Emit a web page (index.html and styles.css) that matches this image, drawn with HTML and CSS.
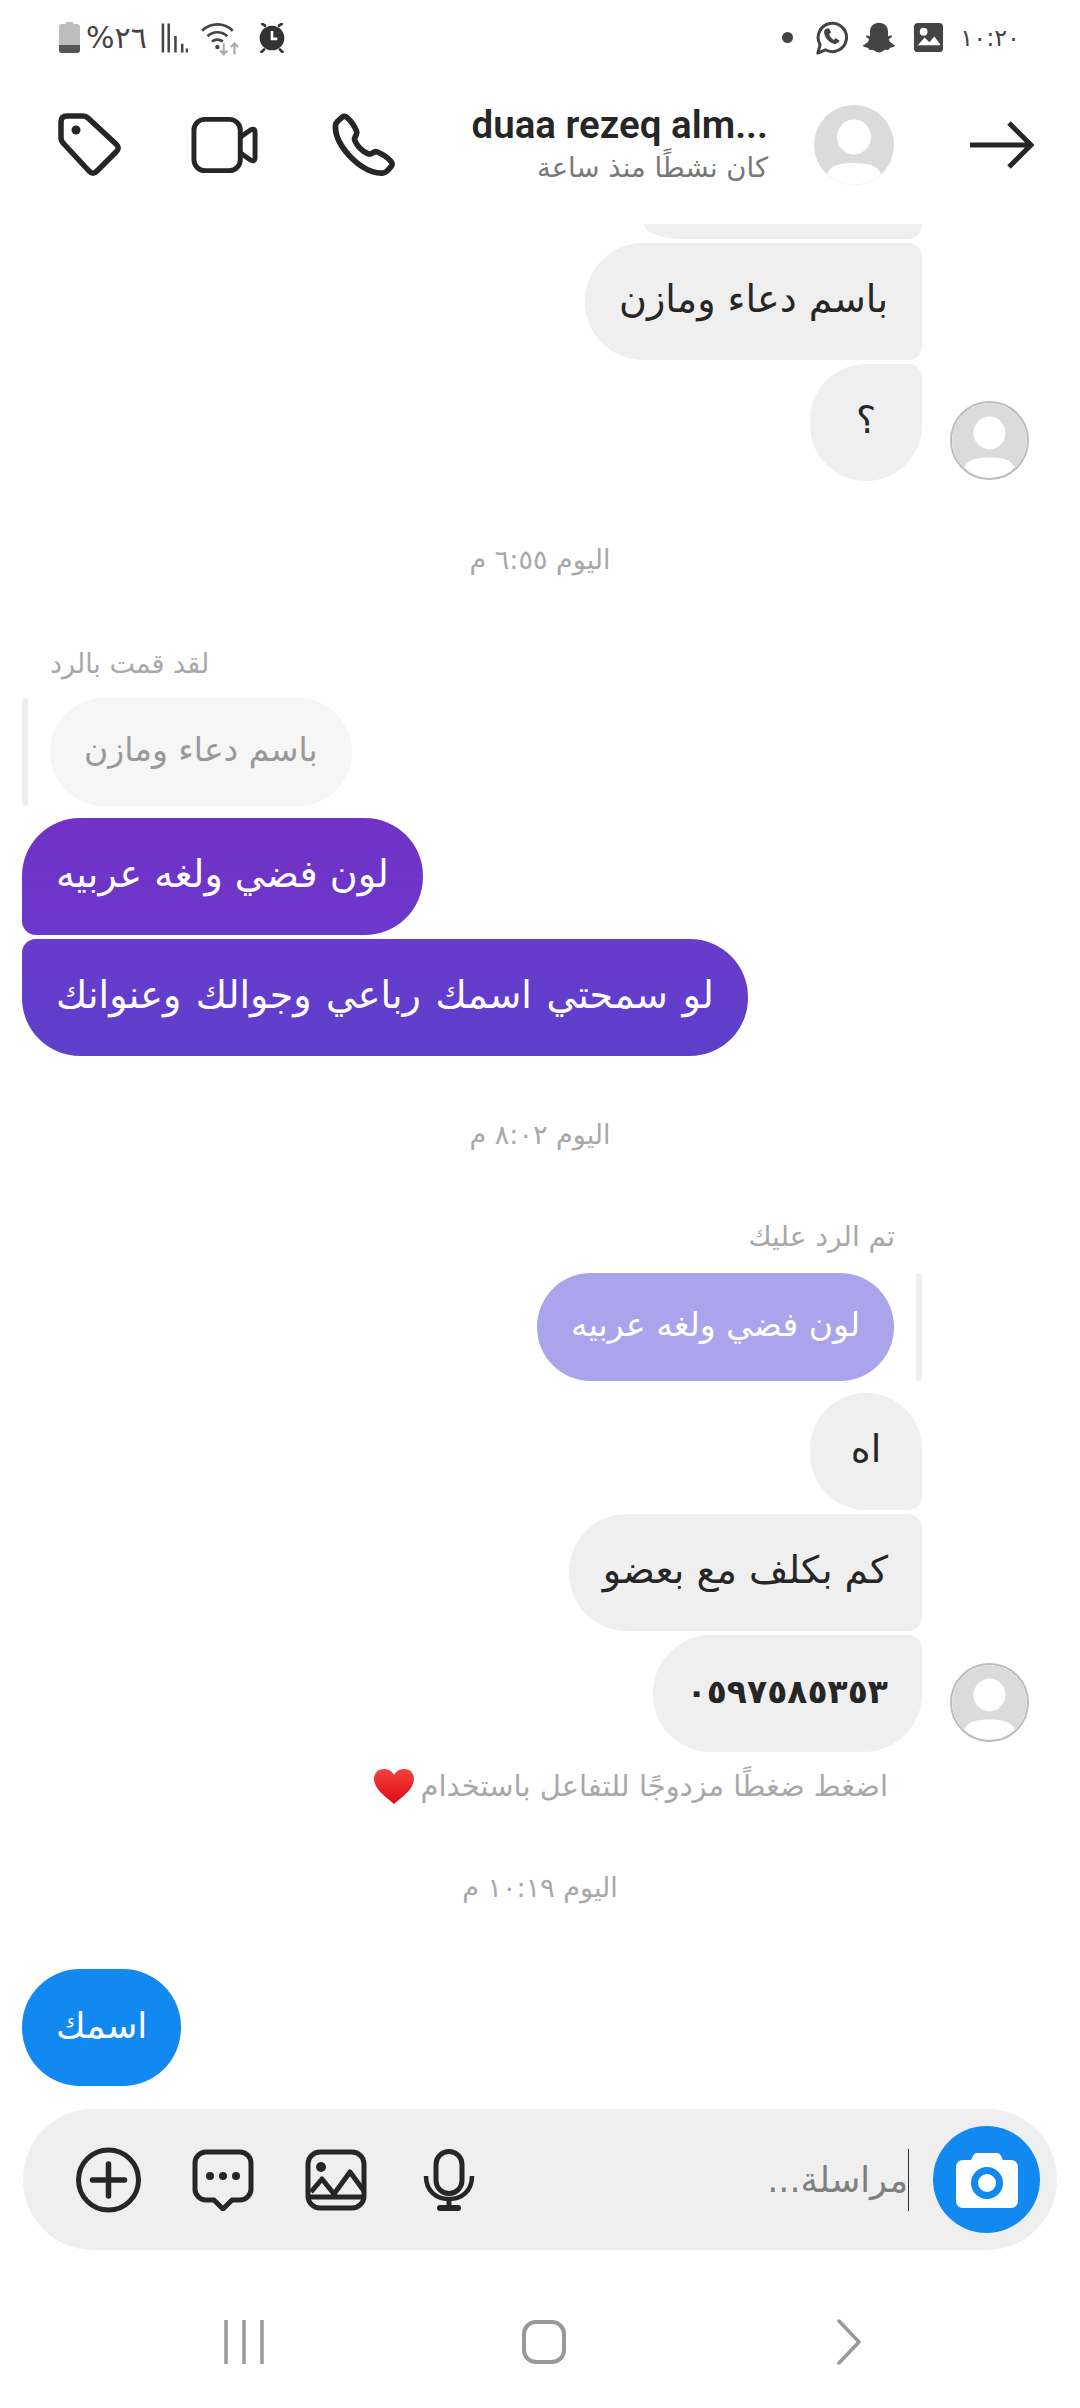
FILE: index.html
```html
<!DOCTYPE html>
<html lang="ar" dir="rtl">
<head>
    <meta charset="UTF-8">
    <meta name="viewport" content="width=device-width, initial-scale=1.0">
    <title>duaa rezeq</title>
    <link rel="stylesheet" href="styles.css">
</head>
<body>
    <!-- shared avatar drawing -->
    <svg class="defs" width="0" height="0">
        <symbol id="person" viewBox="0 0 80 80">
            <circle cx="40" cy="40" r="40" fill="#dbdbdb"/>
            <ellipse cx="40" cy="32" rx="17" ry="17.5" fill="#fff"/>
            <path d="M13 69c3-9 14-11 27-11s24 2 27 11a39 39 0 0 1-54 0z" fill="#fff"/>
        </symbol>
    </svg>

    <div class="status-bar">
        <div class="status-group">
            <span class="status-time">١٠:٢٠</span>
            <svg class="gap-16" width="31" height="31" viewBox="0 0 32 32"><path d="M5 1h22a4 4 0 0 1 4 4v22a4 4 0 0 1-4 4H5a4 4 0 0 1-4-4V5a4 4 0 0 1 4-4z" fill="#444"/><circle cx="11" cy="10" r="4" fill="#fff"/><path d="M4 25l8-9 5 5 5-6 6 8v1H4z" fill="#fff"/></svg>
            <svg class="gap-16" width="36" height="36" viewBox="0 0 40 40"><path d="M20 3c6 0 10 4 10 10v5l4-1c1 1 0 3-3 4 0 3 4 6 7 7 0 2-4 2-6 3-1 2-2 3-4 2-3 0-4 3-8 3s-5-3-8-3c-2 1-3 0-4-2-2-1-6-1-6-3 3-1 7-4 7-7-3-1-4-3-3-4l4 1v-5c0-6 4-10 10-10z" fill="#444"/></svg>
            <svg class="gap-12" width="34" height="36" viewBox="0 0 36 38"><path d="M3 35l2.400-9A15 15 0 1 1 11 31.500z" fill="none" stroke="#444" stroke-width="3.200" stroke-linejoin="round"/><path d="M12 9c-2 1-3 3-2 6 1 4 5 9 10 10 3 1 5-1 6-3l-4-3-2 2c-2-1-4-3-5-6l2-2-2-4z" fill="#444"/></svg>
            <span class="status-dot"></span>
        </div>
        <div class="status-group">
            <svg width="30" height="30" viewBox="0 0 32 34"><path d="M8 3L5 1M24 3l3-2M7 30l-3 3M25 30l3 3" stroke="#333" stroke-width="3" stroke-linecap="round"/><circle cx="16" cy="17" r="14" fill="#333"/><path d="M16 9v9h6" fill="none" stroke="#fff" stroke-width="3"/></svg>
            <svg class="gap-14" width="44" height="36" viewBox="0 0 46 40"><path d="M2 12a24 24 0 0 1 34 0M8 18a16 16 0 0 1 22 0M13 24a9 9 0 0 1 12 0" fill="none" stroke="#444" stroke-width="3"/><circle cx="19" cy="30" r="2.500" fill="#444"/><path d="M26 26v12m-4-4l4 4 4-4" fill="none" stroke="#aaa" stroke-width="2.400"/><path d="M38 38V26m-4 4l4-4 4 4" fill="none" stroke="#aaa" stroke-width="2.400"/></svg>
            <svg class="gap-11" width="27" height="30" viewBox="0 0 28 30"><path d="M2 0v30M8 0v30M15 13v17M22 21v9M27 26v4" stroke="#444" stroke-width="2.600"/></svg>
            <span class="status-battery-text">٢٦%</span>
            <svg class="gap-6" width="21" height="31" viewBox="0 0 21 31"><path d="M7 0h7v2H7z" fill="#bdbdbd"/><rect y="2" width="21" height="29" rx="3" fill="#bdbdbd"/><path d="M0 23h21v5a3 3 0 0 1-3 3H3a3 3 0 0 1-3-3z" fill="#555"/></svg>
        </div>
    </div>

    <div class="header">
        <svg class="back" width="66" height="48" viewBox="0 0 66 48"><path d="M2 24h60M41 2l22 22-22 22" fill="none" stroke="#262626" stroke-width="5" stroke-linejoin="miter"/></svg>
        <svg class="header-avatar" width="80" height="80"><use href="#person"/></svg>
        <div class="peer">
            <div class="peer-name" dir="ltr">duaa rezeq alm...</div>
            <div class="peer-status">كان نشطًا منذ ساعة</div>
        </div>
        <div class="header-actions">
            <svg class="phone" width="68" height="68" viewBox="0 0 24 24"><path d="M18.227 22.912c-4.913 0-9.286-3.627-11.486-5.828C4.486 14.83.731 10.291.921 5.231a3.289 3.289 0 0 1 .908-2.138 17.116 17.116 0 0 1 1.865-1.71 2.307 2.307 0 0 1 3.004.174 13.283 13.283 0 0 1 3.658 5.325 2.551 2.551 0 0 1-.19 1.941l-.455.853a.463.463 0 0 0-.024.387 7.57 7.57 0 0 0 4.077 4.075.455.455 0 0 0 .386-.024l.853-.455a2.548 2.548 0 0 1 1.94-.19 13.278 13.278 0 0 1 5.326 3.658 2.309 2.309 0 0 1 .174 3.003 17.319 17.319 0 0 1-1.71 1.866 3.29 3.29 0 0 1-2.138.91 10.27 10.27 0 0 1-.368.006Zm-13.144-20a.27.27 0 0 0-.167.054A15.121 15.121 0 0 0 3.28 4.47a1.289 1.289 0 0 0-.36.836c-.161 4.301 3.21 8.34 5.235 10.364s6.06 5.403 10.366 5.236a1.284 1.284 0 0 0 .835-.36 15.217 15.217 0 0 0 1.504-1.637.324.324 0 0 0-.047-.41 11.62 11.62 0 0 0-4.457-3.119.545.545 0 0 0-.411.044l-.854.455a2.452 2.452 0 0 1-2.071.116 9.571 9.571 0 0 1-5.189-5.188 2.457 2.457 0 0 1 .115-2.071l.456-.855a.544.544 0 0 0 .043-.41 11.629 11.629 0 0 0-3.118-4.458.36.36 0 0 0-.244-.1Z" fill="#262626"/></svg>
            <svg width="67" height="58" viewBox="0 0 68 58"><rect x="3" y="3" width="47" height="52" rx="11" fill="none" stroke="#262626" stroke-width="5"/><path d="M50 21l10-7c3-2 5-1 5 2v26c0 3-2 4-5 2l-10-7" fill="none" stroke="#262626" stroke-width="5" stroke-linejoin="round"/></svg>
            <svg width="64" height="64" viewBox="0 0 64 64"><path d="M9 3h16c2 0 4 1 5 2l28 26c3 3 3 5 0 8L39 58c-3 3-5 3-8 0L6 31c-2-2-3-4-3-6V9c0-4 2-6 6-6z" fill="none" stroke="#262626" stroke-width="5.500" stroke-linejoin="round"/><circle cx="18" cy="17" r="4.500" fill="#262626"/></svg>
        </div>
    </div>

    <div class="thread">
        <div class="group">
            <svg class="thread-avatar" width="79" height="79"><use href="#person"/></svg>
            <div class="stack">
                <div class="bubble-cut"></div>
                <div class="bubble in mid">باسم دعاء ومازن</div>
                <div class="bubble in last short">؟</div>
            </div>
        </div>

        <div class="stamp">اليوم ٦:٥٥ م</div>

        <div class="reply-label out-label">لقد قمت بالرد</div>
        <div class="reply reply-out">
            <div class="bubble quoted-out">باسم دعاء ومازن</div>
            <div class="reply-bar"></div>
        </div>
        <div class="bubble out purple-a">لون فضي ولغه عربيه</div>
        <div class="bubble out purple-b">لو سمحتي اسمك رباعي وجوالك وعنوانك</div>

        <div class="stamp">اليوم ٨:٠٢ م</div>

        <div class="group group-second">
            <svg class="thread-avatar avatar-raised" width="79" height="79"><use href="#person"/></svg>
            <div class="stack">
                <div class="reply-label in-label">تم الرد عليك</div>
                <div class="reply reply-in">
                    <div class="reply-bar"></div>
                    <div class="bubble quoted-in">لون فضي ولغه عربيه</div>
                </div>
                <div class="bubble in first short">اه</div>
                <div class="bubble in mid">كم بكلف مع بعضو</div>
                <div class="bubble in last number">٠٥٩٧٥٨٥٣٥٣</div>
            </div>
        </div>

        <div class="hint">
            <span>اضغط ضغطًا مزدوجًا للتفاعل باستخدام</span>
            <svg width="42" height="36" viewBox="0 0 42 36"><defs><linearGradient id="heart" x1="0" y1="0" x2="0" y2="1"><stop offset="0" stop-color="#f5413f"/><stop offset="1" stop-color="#d90b12"/></linearGradient></defs><path d="M21 36C12 28 1 21 1 11 1 5 5 1 11 1c4 0 8 2 10 6 2-4 6-6 10-6 6 0 10 4 10 10 0 10-11 17-20 25z" fill="url(#heart)"/></svg>
        </div>

        <div class="stamp stamp-last">اليوم ١٠:١٩ م</div>

        <div class="bubble out blue">اسمك</div>
    </div>

    <div class="composer">
        <div class="camera">
            <svg width="64" height="58" viewBox="0 0 64 58"><path d="M22 2h20c2 0 3 1 4 3l2 4h8c4 0 7 3 7 7v34c0 4-3 7-7 7H8c-4 0-7-3-7-7V16c0-4 3-7 7-7h8l2-4c1-2 2-3 4-3z" fill="#fff"/><circle cx="32" cy="32" r="16" fill="#1189f0"/><circle cx="32" cy="32" r="9" fill="#fff"/></svg>
        </div>
        <div class="caret"></div>
        <div class="placeholder">مراسلة...</div>
        <div class="tools">
            <svg width="62" height="62" viewBox="0 0 62 62"><rect x="18" y="2.500" width="26" height="42" rx="13" fill="none" stroke="#262626" stroke-width="5"/><path d="M8 27c0 15 10 23 23 23s23-8 23-23" fill="none" stroke="#262626" stroke-width="4.500"/><path d="M31 50v7" stroke="#262626" stroke-width="5"/><path d="M22 59h18" stroke="#262626" stroke-width="6" stroke-linecap="round"/></svg>
            <svg width="62" height="62" viewBox="0 0 62 62"><rect x="3" y="3" width="56" height="56" rx="12" fill="none" stroke="#262626" stroke-width="5"/><circle cx="16" cy="18" r="5" fill="#262626"/><path d="M6 43l11-13 12 15 16-22 14 19M4 48h55" fill="none" stroke="#262626" stroke-width="5" stroke-linejoin="round"/></svg>
            <svg width="62" height="62" viewBox="0 0 62 62"><path d="M14 3h34c6 0 11 5 11 11v26c0 6-5 11-11 11h-8l-9 9-9-9h-8C8 51 3 46 3 40V14C3 8 8 3 14 3z" fill="none" stroke="#262626" stroke-width="5" stroke-linejoin="round"/><circle cx="18" cy="27" r="4" fill="#262626"/><circle cx="31" cy="27" r="4" fill="#262626"/><circle cx="44" cy="27" r="4" fill="#262626"/></svg>
            <svg width="65" height="66" viewBox="0 0 65 66"><circle cx="32.500" cy="33" r="30" fill="none" stroke="#262626" stroke-width="5"/><path d="M32.500 17v32M16.500 33h32" stroke="#262626" stroke-width="5.500" stroke-linecap="round"/></svg>
        </div>
    </div>

    <div class="nav-bar">
        <svg class="nav-back" width="26" height="46" viewBox="0 0 26 46"><path d="M3 2l20 21L3 44" fill="none" stroke="#999" stroke-width="3.500" stroke-linecap="round" stroke-linejoin="round"/></svg>
        <svg width="44" height="44" viewBox="0 0 44 44"><rect x="2" y="2" width="40" height="40" rx="12" fill="none" stroke="#999" stroke-width="4"/></svg>
        <svg width="40" height="44" viewBox="0 0 40 44"><path d="M2 1v42M20 1v42M38 1v42" stroke="#999" stroke-width="3.500" stroke-linecap="round"/></svg>
    </div>
</body>
</html>
```

FILE: styles.css
```css
*{
    padding: 0;
    margin: 0;
    box-sizing: border-box;
}
body{
    width: 1080px;
    height: 2408px;
    overflow: hidden;
    background: #fff;
    color: #262626;
    font-family: "DejaVu Sans", sans-serif;
    display: flex;
    flex-direction: column;
}
.defs{
    position: absolute;
}
svg{
    display: block;
    flex: none;
}

/* status bar */
.status-bar{
    height: 75px;
    padding: 0 60px 0 59px;
    display: flex;
    align-items: center;
    justify-content: space-between;
}
.status-group{
    display: flex;
    align-items: center;
}
.status-time{
    font-size: 24px;
    color: #444;
}
.gap-6{
    margin-right: 6px;
}
.gap-11{
    margin-right: 11px;
}
.gap-12{
    margin-right: 12px;
}
.gap-14{
    margin-right: 14px;
}
.gap-16{
    margin-right: 16px;
}
.status-dot{
    width: 11px;
    height: 11px;
    border-radius: 50%;
    background: #444;
    margin-right: 22px;
}
.status-battery-text{
    font-size: 30px;
    color: #444;
    margin-right: 14px;
}

/* header */
.header{
    height: 149px;
    padding: 0 46px 10px 58px;
    display: flex;
    align-items: center;
}
.header-avatar{
    margin-right: 74px;
}
.peer{
    margin-right: 46px;
    width: 300px;
}
.peer-name{
    font-family: Roboto, sans-serif;
    font-size: 38.500px;
    font-weight: 600;
    line-height: 44px;
    text-align: right;
}
.peer-status{
    font-size: 27.500px;
    line-height: 40px;
    color: #777;
}
.header-actions{
    margin-right: auto;
    display: flex;
    align-items: center;
    gap: 69px;
}
.phone{
    margin-left: 3px;
}

/* messages */
.thread{
    flex: 1;
    display: flex;
    flex-direction: column;
}
.group{
    display: flex;
    align-items: flex-end;
    gap: 28px;
    padding-right: 51px;
}
.thread-avatar{
    border: 2px solid #bcbcbc;
    border-radius: 50%;
    margin-bottom: 1px;
}
.avatar-raised{
    margin-bottom: 10px;
}
.stack{
    flex: 1;
    display: flex;
    flex-direction: column;
    align-items: flex-start;
    gap: 4px;
}
.bubble{
    height: 117px;
    padding: 0 34px;
    border-radius: 58px;
    font-size: 38px;
    line-height: 113px;
    white-space: nowrap;
}
.bubble-cut{
    width: 278px;
    height: 15px;
    background: #efefef;
    border-bottom-left-radius: 37px 15px;
    border-bottom-right-radius: 14px;
}
.in{
    background: #efefef;
}
.short{
    min-width: 112px;
    text-align: center;
}
.first{
    border-bottom-right-radius: 14px;
}
.mid{
    border-top-right-radius: 14px;
    border-bottom-right-radius: 14px;
}
.last{
    border-top-right-radius: 14px;
}
.number{
    font-size: 33px;
    font-weight: bold;
}
.out{
    align-self: flex-end;
    margin-left: 22px;
    color: #fff;
}
.purple-a{
    margin-top: 12px;
    background: linear-gradient(#7230c6, #6c38cb);
    border-bottom-left-radius: 14px;
}
.purple-b{
    margin-top: 4px;
    background: linear-gradient(#683bcd, #5f3fcb);
    border-top-left-radius: 14px;
    word-spacing: 2.500px;
}
.blue{
    margin-top: 61px;
    font-size: 36px;
    background: #1189f0;
}
.stamp{
    margin-top: 59px;
    font-size: 27px;
    line-height: 40px;
    color: #a8a8a8;
    text-align: center;
}
.stamp-last{
    margin-top: 62px;
}
.reply-label{
    font-size: 28px;
    line-height: 40px;
    color: #a8a8a8;
}
.out-label{
    font-size: 27px;
    margin-top: 64px;
    align-self: flex-end;
    margin-left: 50px;
}
.in-label{
    margin-right: 27px;
    margin-bottom: 12px;
}
.reply{
    display: flex;
    height: 108px;
}
.reply-bar{
    width: 6px;
    border-radius: 3px;
    background: #efefef;
}
.reply-out{
    margin-top: 14px;
    align-self: flex-end;
    margin-left: 22px;
    gap: 22px;
}
.reply-in{
    gap: 22px;
    margin-bottom: 8px;
}
.reply .bubble{
    height: 108px;
    font-size: 33px;
    line-height: 104px;
    border-radius: 54px;
}
.quoted-out{
    background: #f6f6f6;
    color: #999;
}
.quoted-in{
    background: #a9a4ec;
    color: #fff;
}
.group-second{
    margin-top: 62px;
}
.hint{
    margin-top: 14px;
    padding-right: 192px;
    height: 40px;
    display: flex;
    align-items: center;
    gap: 6px;
    font-size: 29px;
    color: #a8a8a8;
}

/* composer */
.composer{
    height: 141px;
    margin: 0 23px;
    padding: 0 17px 0 53px;
    background: #efefef;
    border-radius: 70px;
    display: flex;
    align-items: center;
}
.camera{
    width: 107px;
    height: 107px;
    border-radius: 50%;
    background: #1189f0;
    display: flex;
    align-items: center;
    justify-content: center;
}
.caret{
    width: 1px;
    height: 62px;
    margin-right: 24px;
    background: #333;
}
.placeholder{
    font-size: 35px;
    color: #7f7f7f;
}
.tools{
    margin-right: auto;
    display: flex;
    align-items: center;
    gap: 51px;
}

/* nav */
.nav-bar{
    height: 158px;
    padding: 26px 218px 0 0;
    display: flex;
    align-items: center;
    gap: 258px;
}
.nav-back{
    margin-left: 12px;
}
```
